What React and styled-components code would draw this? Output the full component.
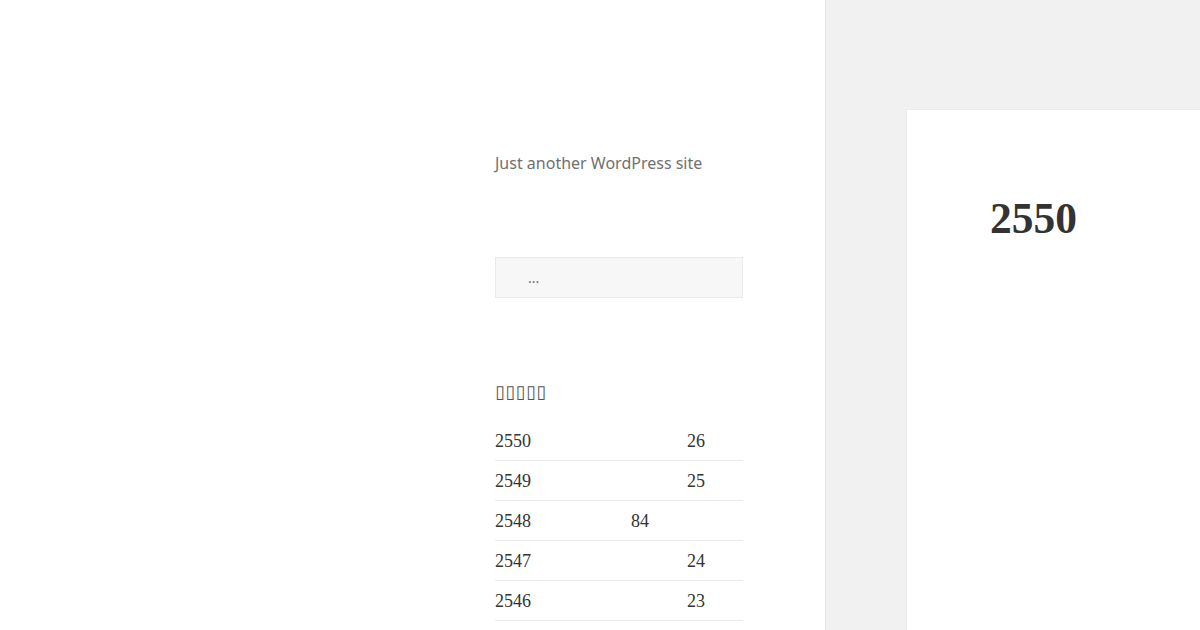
import React from 'react';
import styled, { createGlobalStyle } from 'styled-components';

const GlobalStyle = createGlobalStyle`
  html, body {
    margin: 0;
    padding: 0;
    background: #f1f1f1;
  }
`;

const Page = styled.div`
  display: flex;
  width: 1200px;
  height: 630px;
  overflow: hidden;
  background: #f1f1f1;
`;

const Sidebar = styled.aside`
  flex: 0 0 826px;
  box-sizing: border-box;
  padding: 151px 0 0 495px;
  background: #fff;
  border-right: 1px solid #e4e4e4;
`;

const Column = styled.div`
  width: 248px;
`;

const Tagline = styled.p`
  margin: 0 0 82px;
  font-family: 'Noto Sans', sans-serif;
  font-size: 16px;
  line-height: 24px;
  color: #707070;
`;

const Search = styled.input`
  display: block;
  box-sizing: border-box;
  width: 248px;
  height: 41px;
  margin: 0 0 84px;
  padding: 0 0 0 32px;
  background: #f7f7f7;
  border: 1px solid #eaeaea;
  border-radius: 0;
  font-family: 'Noto Sans', sans-serif;
  font-size: 14px;
  outline: none;
  &::placeholder {
    color: #707070;
  }
`;

const WidgetTitle = styled.h2`
  margin: 0 0 19px;
  font-family: 'DejaVu Sans', sans-serif;
  font-size: 18px;
  font-weight: 400;
  line-height: 20px;
  letter-spacing: 0.4px;
  color: #555;
`;

const List = styled.ul`
  margin: 0;
  padding: 0;
  list-style: none;
`;

const Row = styled.li`
  display: grid;
  grid-template-columns: 136px 56px 1fr;
  height: 38px;
  padding-top: 1px;
  border-bottom: 1px solid #eaeaea;
  font-family: 'Liberation Serif', serif;
  font-size: 18px;
  line-height: 39px;
  color: #333;
`;

const Year = styled.span`
  grid-column: 1;
`;

const Count = styled.span`
  grid-column: ${p => p.$col};
`;

const Main = styled.main`
  flex: 1;
  padding: 110px 0 0 81px;
`;

const Article = styled.article`
  box-sizing: border-box;
  height: 100%;
  padding: 82px 0 0 83px;
  background: #fff;
  box-shadow: 0 0 1px rgba(0, 0, 0, 0.15);
`;

const Title = styled.h1`
  margin: 0;
  font-family: 'Liberation Serif', serif;
  font-size: 43.5px;
  font-weight: 700;
  line-height: 52px;
  color: #333;
`;

const archives = [
  { year: '2550', count: '26', col: 3 },
  { year: '2549', count: '25', col: 3 },
  { year: '2548', count: '84', col: 2 },
  { year: '2547', count: '24', col: 3 },
  { year: '2546', count: '23', col: 3 }
];

export default function App() {
  return (
    <Page>
      <GlobalStyle />
      <Sidebar>
        <Column>
          <Tagline>Just another WordPress site</Tagline>
          <Search type='search' placeholder='...' />
          <WidgetTitle>▯▯▯▯▯</WidgetTitle>
          <List>
            { archives.map(a => (
              <Row key={ a.year }>
                <Year>{ a.year }</Year>
                <Count $col={ a.col }>{ a.count }</Count>
              </Row>
            )) }
          </List>
        </Column>
      </Sidebar>
      <Main>
        <Article>
          <Title>2550</Title>
        </Article>
      </Main>
    </Page>
  );
}
